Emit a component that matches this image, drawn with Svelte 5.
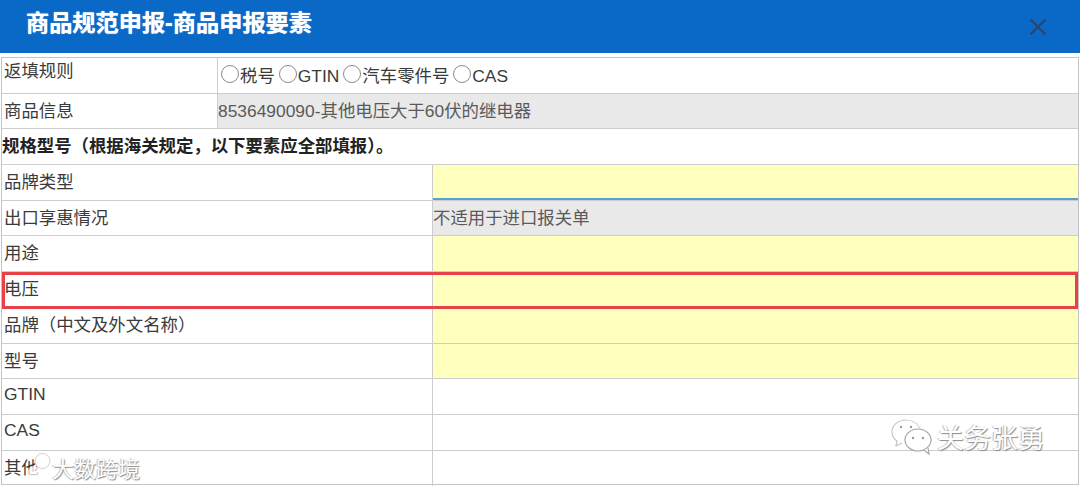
<script>
    const rules = ["税号", "GTIN", "汽车零件号", "CAS"];

    const fields = [
        { label: "品牌类型", kind: "req", focused: true },
        { label: "出口享惠情况", kind: "off", value: "不适用于进口报关单" },
        { label: "用途", kind: "req" },
        { label: "电压", kind: "req", marked: true },
        { label: "品牌（中文及外文名称）", kind: "req" },
        { label: "型号", kind: "req" },
        { label: "GTIN", kind: "", latin: true },
        { label: "CAS", kind: "", latin: true },
        { label: "其他", kind: "" },
    ];
</script>

<div class="page">
    <header>
        <h1>商品规范申报-商品申报要素</h1>
        <svg class="close" width="20" height="20" viewBox="0 0 20 20">
            <path d="M2.5 2.5 17.5 17.5M17.5 2.5 2.5 17.5" fill="none" stroke="#2e4470" stroke-width="2.4" />
        </svg>
    </header>

    <div class="sheet">
        <div class="row top">
            <div class="label first">返填规则</div>
            <div class="value radios">
                {#each rules as rule}
                    <label><input type="radio" name="rule" />{rule}</label>
                {/each}
            </div>
        </div>
        <div class="row top">
            <div class="label">商品信息</div>
            <div class="value off">8536490090-其他电压大于60伏的继电器</div>
        </div>
        <div class="section">规格型号（根据海关规定，以下要素应全部填报）。</div>
        {#each fields as field}
            <div class="row field" class:marked={field.marked}>
                <div class="label" class:latin={field.latin}>{field.label}</div>
                <div class="value {field.kind}" class:focused={field.focused}>{field.value ?? ""}</div>
            </div>
        {/each}
    </div>

    <div class="mark left">
        <svg width="26" height="30" viewBox="0 0 26 30">
            <circle cx="8" cy="20" r="6" fill="#fff" fill-opacity="0.75" />
            <circle cx="16.5" cy="9" r="6.5" fill="none" stroke="#fff" stroke-width="2.6" />
            <circle cx="16.5" cy="9" r="7.5" fill="none" stroke="#c4c4c4" stroke-width="0.8" />
        </svg>
        <span>大数跨境</span>
    </div>

    <div class="mark right">
        <svg width="44" height="38" viewBox="0 0 44 38">
            <path d="M16 2C8 2 2 7 2 14c0 4 2 7 5 9l-1 5 6-3" fill="#fff" stroke="#c4c4c4" stroke-width="1.2" />
            <path d="M16 2c7 0 13 4 14 10" fill="none" stroke="#d8d8d8" stroke-width="1.2" />
            <ellipse cx="28" cy="22" rx="13" ry="11" fill="#fff" stroke="#a8a8a8" stroke-width="1.2" />
            <path d="M34 32l5 4-1-6" fill="#fff" stroke="#a8a8a8" stroke-width="1.2" />
            <circle cx="11" cy="9" r="1.2" fill="#999" />
            <circle cx="21" cy="9" r="1.2" fill="#999" />
            <circle cx="23" cy="20" r="1.2" fill="#999" />
            <circle cx="33" cy="20" r="1.2" fill="#999" />
        </svg>
        <span>关务张勇</span>
    </div>
</div>

<style>
    :global(body) {
        background: #fff;
    }

    .page {
        position: relative;
        width: 1080px;
        height: 486px;
        overflow: hidden;
        font-family: "Liberation Sans", "Noto Sans CJK SC", sans-serif;
        font-size: 17.4px;
        color: #3a3a3a;
    }

    header {
        height: 53px;
        box-sizing: border-box;
        padding: 0 32px 8px 26px;
        display: flex;
        align-items: center;
        justify-content: space-between;
        background: #0a69c7;
    }

    h1 {
        margin: 0;
        font-size: 23.2px;
        line-height: 32px;
        font-weight: 700;
        color: #fff;
        text-shadow: 0 0 1px #fff;
    }

    .close {
        margin-top: 8px;
    }

    .sheet {
        margin: 4px 1px 0;
        border: 1px solid #c4c4c4;
        height: 428px;
        box-sizing: border-box;
    }

    .row {
        position: relative;
        display: grid;
        grid-template-columns: 431px 1fr;
        grid-template-rows: minmax(0, 1fr);
        height: 35.7px;
        box-sizing: border-box;
        border-bottom: 1px solid #cdcdcd;
    }

    .row.top {
        grid-template-columns: 216px 1fr;
    }

    .row:last-child {
        border-bottom: 0;
    }

    .label {
        padding: 4px 0 0 2px;
        line-height: 26px;
        white-space: nowrap;
        border-right: 1px solid #cdcdcd;
    }

    .first {
        padding-top: 0;
    }

    .latin {
        padding-top: 2px;
    }

    .value {
        line-height: 34px;
        overflow: hidden;
        white-space: nowrap;
        color: #5a5a5a;
    }

    .req {
        background: #ffffbe;
    }

    .off {
        background: #e9e9e9;
    }

    .focused {
        box-shadow: inset 0 -2px 0 #5b9fd6;
    }

    .radios {
        display: flex;
        gap: 4px;
        padding: 2px 0 0 3px;
        line-height: 32px;
        color: #3a3a3a;
    }

    .radios label {
        display: flex;
        align-items: center;
    }

    .radios input {
        appearance: none;
        width: 18px;
        height: 18px;
        margin: 0 1px 4px 0;
        border: 1px solid #8a8a8a;
        border-radius: 50%;
    }

    .section {
        height: 35.7px;
        box-sizing: border-box;
        padding-top: 4px;
        line-height: 26px;
        font-weight: 700;
        color: #222;
        border-bottom: 1px solid #cdcdcd;
    }

    .marked::after {
        content: "";
        position: absolute;
        left: 0;
        right: 0;
        top: 0;
        height: 37px;
        box-sizing: border-box;
        border: 3px solid #e8414a;
        z-index: 1;
    }

    .mark {
        position: absolute;
        display: flex;
        align-items: center;
        color: #fff;
        text-shadow: 1px 1px 1px #8c8c8c, -1px 0 1px #bbb;
    }

    .mark.left {
        left: 26px;
        top: 451px;
        gap: 0;
        font-size: 22px;
    }

    .mark.right {
        left: 890px;
        top: 417px;
        gap: 3px;
        font-size: 27px;
    }
</style>
